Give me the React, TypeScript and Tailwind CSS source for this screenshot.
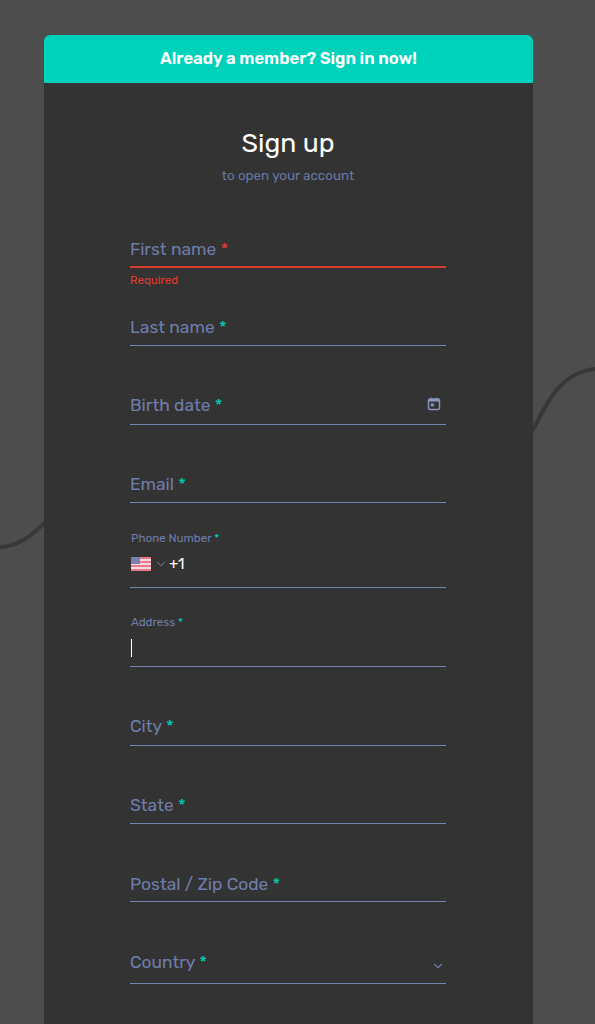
import React from 'react';
import { ChevronDown } from 'lucide-react';

const fontStack = "font-['Rubik','Roboto','Inter',sans-serif]";

const Field = ({ label, className, error, trailing, labelClass = 'pb-[6px]' }: { label: string; className: string; error?: boolean; trailing?: React.ReactNode; labelClass?: string }) => (
  <div className={`flex items-end justify-between ${error ? 'border-b-2 border-[#d63b2f]' : 'border-b border-[#7582b0]'} ${className}`}>
    <span className={`${labelClass} text-[17.4px] leading-[24px] text-[#6f7dab]`}>
      {label} <span className={error ? 'text-[#e5392d]' : 'text-[#00c9b1]'}>*</span>
    </span>
    {trailing}
  </div>
);

const SmallLabel = ({ label }: { label: string }) => (
  <span className="block pl-px text-[11.6px] leading-[14px] text-[#6f7dab]">
    {label} <span className="text-[#00c9b1]">*</span>
  </span>
);

const UsFlag = () => (
  <svg width="20" height="14" viewBox="0 0 20 14" className="ml-px shrink-0">
    <rect width="20" height="14" fill="#f4d9de" />
    <rect width="20" height="2" fill="#e8788c" />
    <rect y="4" width="20" height="2" fill="#e8788c" />
    <rect y="8" width="20" height="2" fill="#e8788c" />
    <rect y="12" width="20" height="2" fill="#e8788c" />
    <rect width="9" height="7" fill="#7a7fae" />
  </svg>
);

const CalendarIcon = () => (
  <svg width="14" height="14" viewBox="0 0 14 14" className="mb-[13px] mr-[5px]">
    <rect x="1.5" y="2" width="11" height="10.5" rx="1.5" fill="none" stroke="#8a96c0" strokeWidth="1.4" />
    <rect x="1.5" y="2" width="11" height="2.6" fill="#8a96c0" />
    <rect x="3.8" y="6.4" width="3" height="3" fill="#8a96c0" />
    <rect x="3.5" y="0.8" width="1.4" height="2" fill="#8a96c0" />
    <rect x="9.1" y="0.8" width="1.4" height="2" fill="#8a96c0" />
  </svg>
);

const App = () => {
  return (
    <div className={`relative h-[1024px] overflow-hidden bg-[#4d4d4d] pl-[44px] pt-[35px] ${fontStack}`}>
      {/* background waves */}
      <svg className="absolute left-0 top-0" width="595" height="1024" viewBox="0 0 595 1024" fill="none">
        <path d="M0 547 C18 547 34 535 50 517" stroke="#383838" strokeWidth="4" />
        <path d="M528 440 C545 405 560 372 595 369" stroke="#383838" strokeWidth="4" />
      </svg>

      <div className="relative h-[1100px] w-[489px] overflow-hidden rounded-t-[6px] bg-[#333333]">
        <div className="flex h-[48px] items-center justify-center bg-[#00d1bb] pb-px text-[16.6px] font-semibold text-white">
          Already a member? Sign in now!
        </div>

        <div className="pl-[86px] pr-[87px]">
          <h1 className="mt-[42px] text-center text-[26.5px] leading-[36px] text-white">Sign up</h1>
          <p className="mt-[5px] text-center text-[13.4px] leading-[18px] text-[#6a77a3]">to open your account</p>

          <Field label="First name" error className="mt-[40px] h-[44px]" labelClass="pb-[5px]" />
          <p className="mt-[6px] text-[11.5px] leading-[13px] text-[#e5392d]">Required</p>

          <Field label="Last name" className="mt-[19px] h-[40px]" />
          <Field label="Birth date" className="mt-[39px] h-[40px]" labelClass="pb-[7px]" trailing={<CalendarIcon />} />
          <Field label="Email" className="mt-[38px] h-[40px]" />

          <div className="mt-[28px] h-[57px] border-b border-[#7582b0]">
            <SmallLabel label="Phone Number" />
            <div className="mt-[8px] flex items-center">
              <UsFlag />
              <ChevronDown size={14} strokeWidth={1.5} className="ml-[3px] text-[#8492c0]" />
              <span className="ml-[1px] text-[15px] leading-[22px] text-white">+1</span>
            </div>
          </div>

          <div className="mt-[27px] h-[52px] border-b border-[#7582b0]">
            <SmallLabel label="Address" />
            <div className="mt-[10px] ml-px h-[18px] w-px bg-white" />
          </div>

          <Field label="City" className="mt-[39px] h-[40px]" labelClass="pb-[7px]" />
          <Field label="State" className="mt-[38px] h-[40px]" />
          <Field label="Postal / Zip Code" className="mt-[38px] h-[40px]" labelClass="pb-[5px]" />
          <Field
            label="Country"
            labelClass="pb-[9px]"
            className="mt-[41px] h-[41px]"
            trailing={<ChevronDown size={14} strokeWidth={2} className="mb-[10px] mr-[1px] text-[#6f7dab]" />}
          />
        </div>
      </div>
    </div>
  );
};

export default App;
